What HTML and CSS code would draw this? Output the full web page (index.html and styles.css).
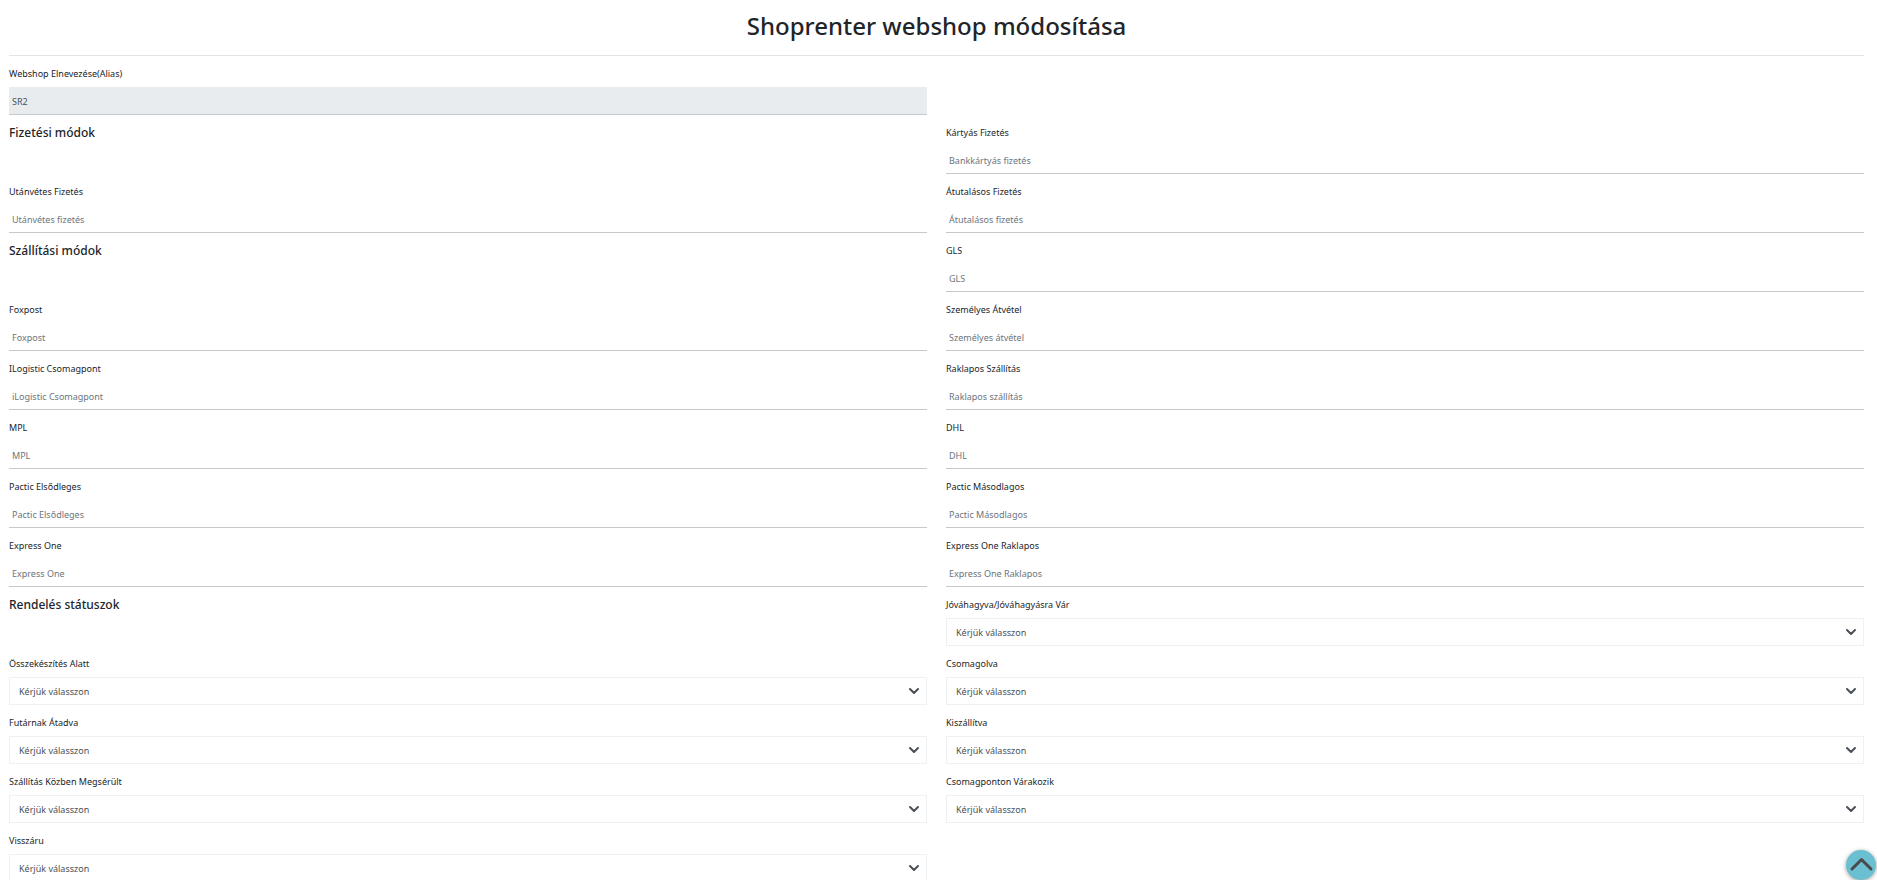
FILE: index.html
```
<!DOCTYPE html>
<html lang="hu">
<head>
<meta charset="utf-8">
<title>Shoprenter webshop módosítása</title>
<link rel="stylesheet" href="styles.css">
</head>
<body>
<main class="page">
  <h1 class="page-title">Shoprenter webshop módosítása</h1>
  <form class="form-grid">
    <div class="field"><label for="alias">Webshop Elnevezése(Alias)</label><input class="text-input" id="alias" type="text" value="SR2" disabled></div>

    <h2 class="section-title">Fizetési módok</h2>
    <div class="field"><label for="card">Kártyás Fizetés</label><input class="text-input" id="card" type="text" placeholder="Bankkártyás fizetés"></div>
    <div class="field"><label for="cod">Utánvétes Fizetés</label><input class="text-input" id="cod" type="text" placeholder="Utánvétes fizetés"></div>
    <div class="field"><label for="transfer">Átutalásos Fizetés</label><input class="text-input" id="transfer" type="text" placeholder="Átutalásos fizetés"></div>

    <h2 class="section-title">Szállítási módok</h2>
    <div class="field"><label for="gls">GLS</label><input class="text-input" id="gls" type="text" placeholder="GLS"></div>
    <div class="field"><label for="foxpost">Foxpost</label><input class="text-input" id="foxpost" type="text" placeholder="Foxpost"></div>
    <div class="field"><label for="pickup">Személyes Átvétel</label><input class="text-input" id="pickup" type="text" placeholder="Személyes átvétel"></div>
    <div class="field"><label for="ilogistic">ILogistic Csomagpont</label><input class="text-input" id="ilogistic" type="text" placeholder="iLogistic Csomagpont"></div>
    <div class="field"><label for="pallet">Raklapos Szállítás</label><input class="text-input" id="pallet" type="text" placeholder="Raklapos szállítás"></div>
    <div class="field"><label for="mpl">MPL</label><input class="text-input" id="mpl" type="text" placeholder="MPL"></div>
    <div class="field"><label for="dhl">DHL</label><input class="text-input" id="dhl" type="text" placeholder="DHL"></div>
    <div class="field"><label for="pactic1">Pactic Elsődleges</label><input class="text-input" id="pactic1" type="text" placeholder="Pactic Elsődleges"></div>
    <div class="field"><label for="pactic2">Pactic Másodlagos</label><input class="text-input" id="pactic2" type="text" placeholder="Pactic Másodlagos"></div>
    <div class="field"><label for="express">Express One</label><input class="text-input" id="express" type="text" placeholder="Express One"></div>
    <div class="field"><label for="express-pallet">Express One Raklapos</label><input class="text-input" id="express-pallet" type="text" placeholder="Express One Raklapos"></div>

    <h2 class="section-title">Rendelés státuszok</h2>
    <div class="field"><label for="approved">Jóváhagyva/Jóváhagyásra Vár</label><div class="select-box"><select id="approved"><option>Kérjük válasszon</option></select><svg class="chevron" viewBox="0 0 12 12" aria-hidden="true"><path d="M2 4l4 4 4-4"/></svg></div></div>
    <div class="field"><label for="preparing">Összekészítés Alatt</label><div class="select-box"><select id="preparing"><option>Kérjük válasszon</option></select><svg class="chevron" viewBox="0 0 12 12" aria-hidden="true"><path d="M2 4l4 4 4-4"/></svg></div></div>
    <div class="field"><label for="packed">Csomagolva</label><div class="select-box"><select id="packed"><option>Kérjük válasszon</option></select><svg class="chevron" viewBox="0 0 12 12" aria-hidden="true"><path d="M2 4l4 4 4-4"/></svg></div></div>
    <div class="field"><label for="courier">Futárnak Átadva</label><div class="select-box"><select id="courier"><option>Kérjük válasszon</option></select><svg class="chevron" viewBox="0 0 12 12" aria-hidden="true"><path d="M2 4l4 4 4-4"/></svg></div></div>
    <div class="field"><label for="delivered">Kiszállítva</label><div class="select-box"><select id="delivered"><option>Kérjük válasszon</option></select><svg class="chevron" viewBox="0 0 12 12" aria-hidden="true"><path d="M2 4l4 4 4-4"/></svg></div></div>
    <div class="field"><label for="damaged">Szállítás Közben Megsérült</label><div class="select-box"><select id="damaged"><option>Kérjük válasszon</option></select><svg class="chevron" viewBox="0 0 12 12" aria-hidden="true"><path d="M2 4l4 4 4-4"/></svg></div></div>
    <div class="field"><label for="waiting">Csomagponton Várakozik</label><div class="select-box"><select id="waiting"><option>Kérjük válasszon</option></select><svg class="chevron" viewBox="0 0 12 12" aria-hidden="true"><path d="M2 4l4 4 4-4"/></svg></div></div>
    <div class="field"><label for="returned">Visszáru</label><div class="select-box"><select id="returned"><option>Kérjük válasszon</option></select><svg class="chevron" viewBox="0 0 12 12" aria-hidden="true"><path d="M2 4l4 4 4-4"/></svg></div></div>
  </form>
</main>
<button class="to-top" type="button" aria-label="Vissza a tetejére"><svg viewBox="0 0 30 30" aria-hidden="true"><path d="M6 19l9.500-9.500L25 19"/></svg></button>
</body>
</html>
```
FILE: styles.css
```
* { box-sizing: border-box; }

html { scrollbar-width: none; }

body {
  margin: 0;
  background: #fff;
  color: #212529;
  font-family: "Segoe UI", "Noto Sans", "Open Sans", sans-serif;
  font-size: 9px;
}

.page { padding: 0 13px 0 9px; }

.page-title {
  margin: 0 0 9px;
  padding: 8px 0 11px;
  border-bottom: 1px solid #e3e4e5;
  font-size: 24px;
  line-height: 36px;
  font-weight: 500;
  text-align: center;
}

.form-grid {
  display: grid;
  grid-template-columns: 1fr 1fr;
  column-gap: 19px;
  row-gap: 9px;
}

.field {
  display: flex;
  flex-direction: column;
  gap: 4px;
}

/* The alias field sits alone in the first row. */
.field:first-child + .section-title { grid-column: 1; }

.field label {
  line-height: 18px;
  color: #212529;
}

.section-title {
  margin: 0;
  font-size: 12px;
  line-height: 18px;
  font-weight: 500;
}

.text-input {
  width: 100%;
  height: 28px;
  padding: 2px 3px 0;
  border: 0;
  border-bottom: 1px solid #c6c8ca;
  border-radius: 0;
  background: #fff;
  color: #495057;
  font: inherit;
}

.text-input::placeholder { color: #6c757d; opacity: 1; }

.text-input:disabled { background: #e9ecef; }

.select-box { display: grid; align-items: center; }

.select-box select {
  grid-area: 1 / 1;
  appearance: none;
  width: 100%;
  height: 28px;
  padding: 0 30px 0 9px;
  border: 1px solid #eff0f1;
  border-radius: 0;
  background: #fff;
  color: #495057;
  font: inherit;
}

.chevron {
  grid-area: 1 / 1;
  justify-self: end;
  width: 12px;
  height: 12px;
  margin-right: 7px;
  pointer-events: none;
  fill: none;
  stroke: #495057;
  stroke-width: 2;
  stroke-linecap: round;
  stroke-linejoin: round;
}

.to-top {
  position: fixed;
  right: 1px;
  bottom: 0;
  width: 30px;
  height: 30px;
  padding: 0;
  border: 0;
  border-radius: 50%;
  background: #6abfd0;
  box-shadow: 0 1px 4px rgba(0, 0, 0, 0.4);
}

.to-top svg {
  display: block;
  width: 30px;
  height: 30px;
  fill: none;
  stroke: #4a4a4a;
  stroke-width: 3;
  stroke-linecap: round;
  stroke-linejoin: round;
}
```
